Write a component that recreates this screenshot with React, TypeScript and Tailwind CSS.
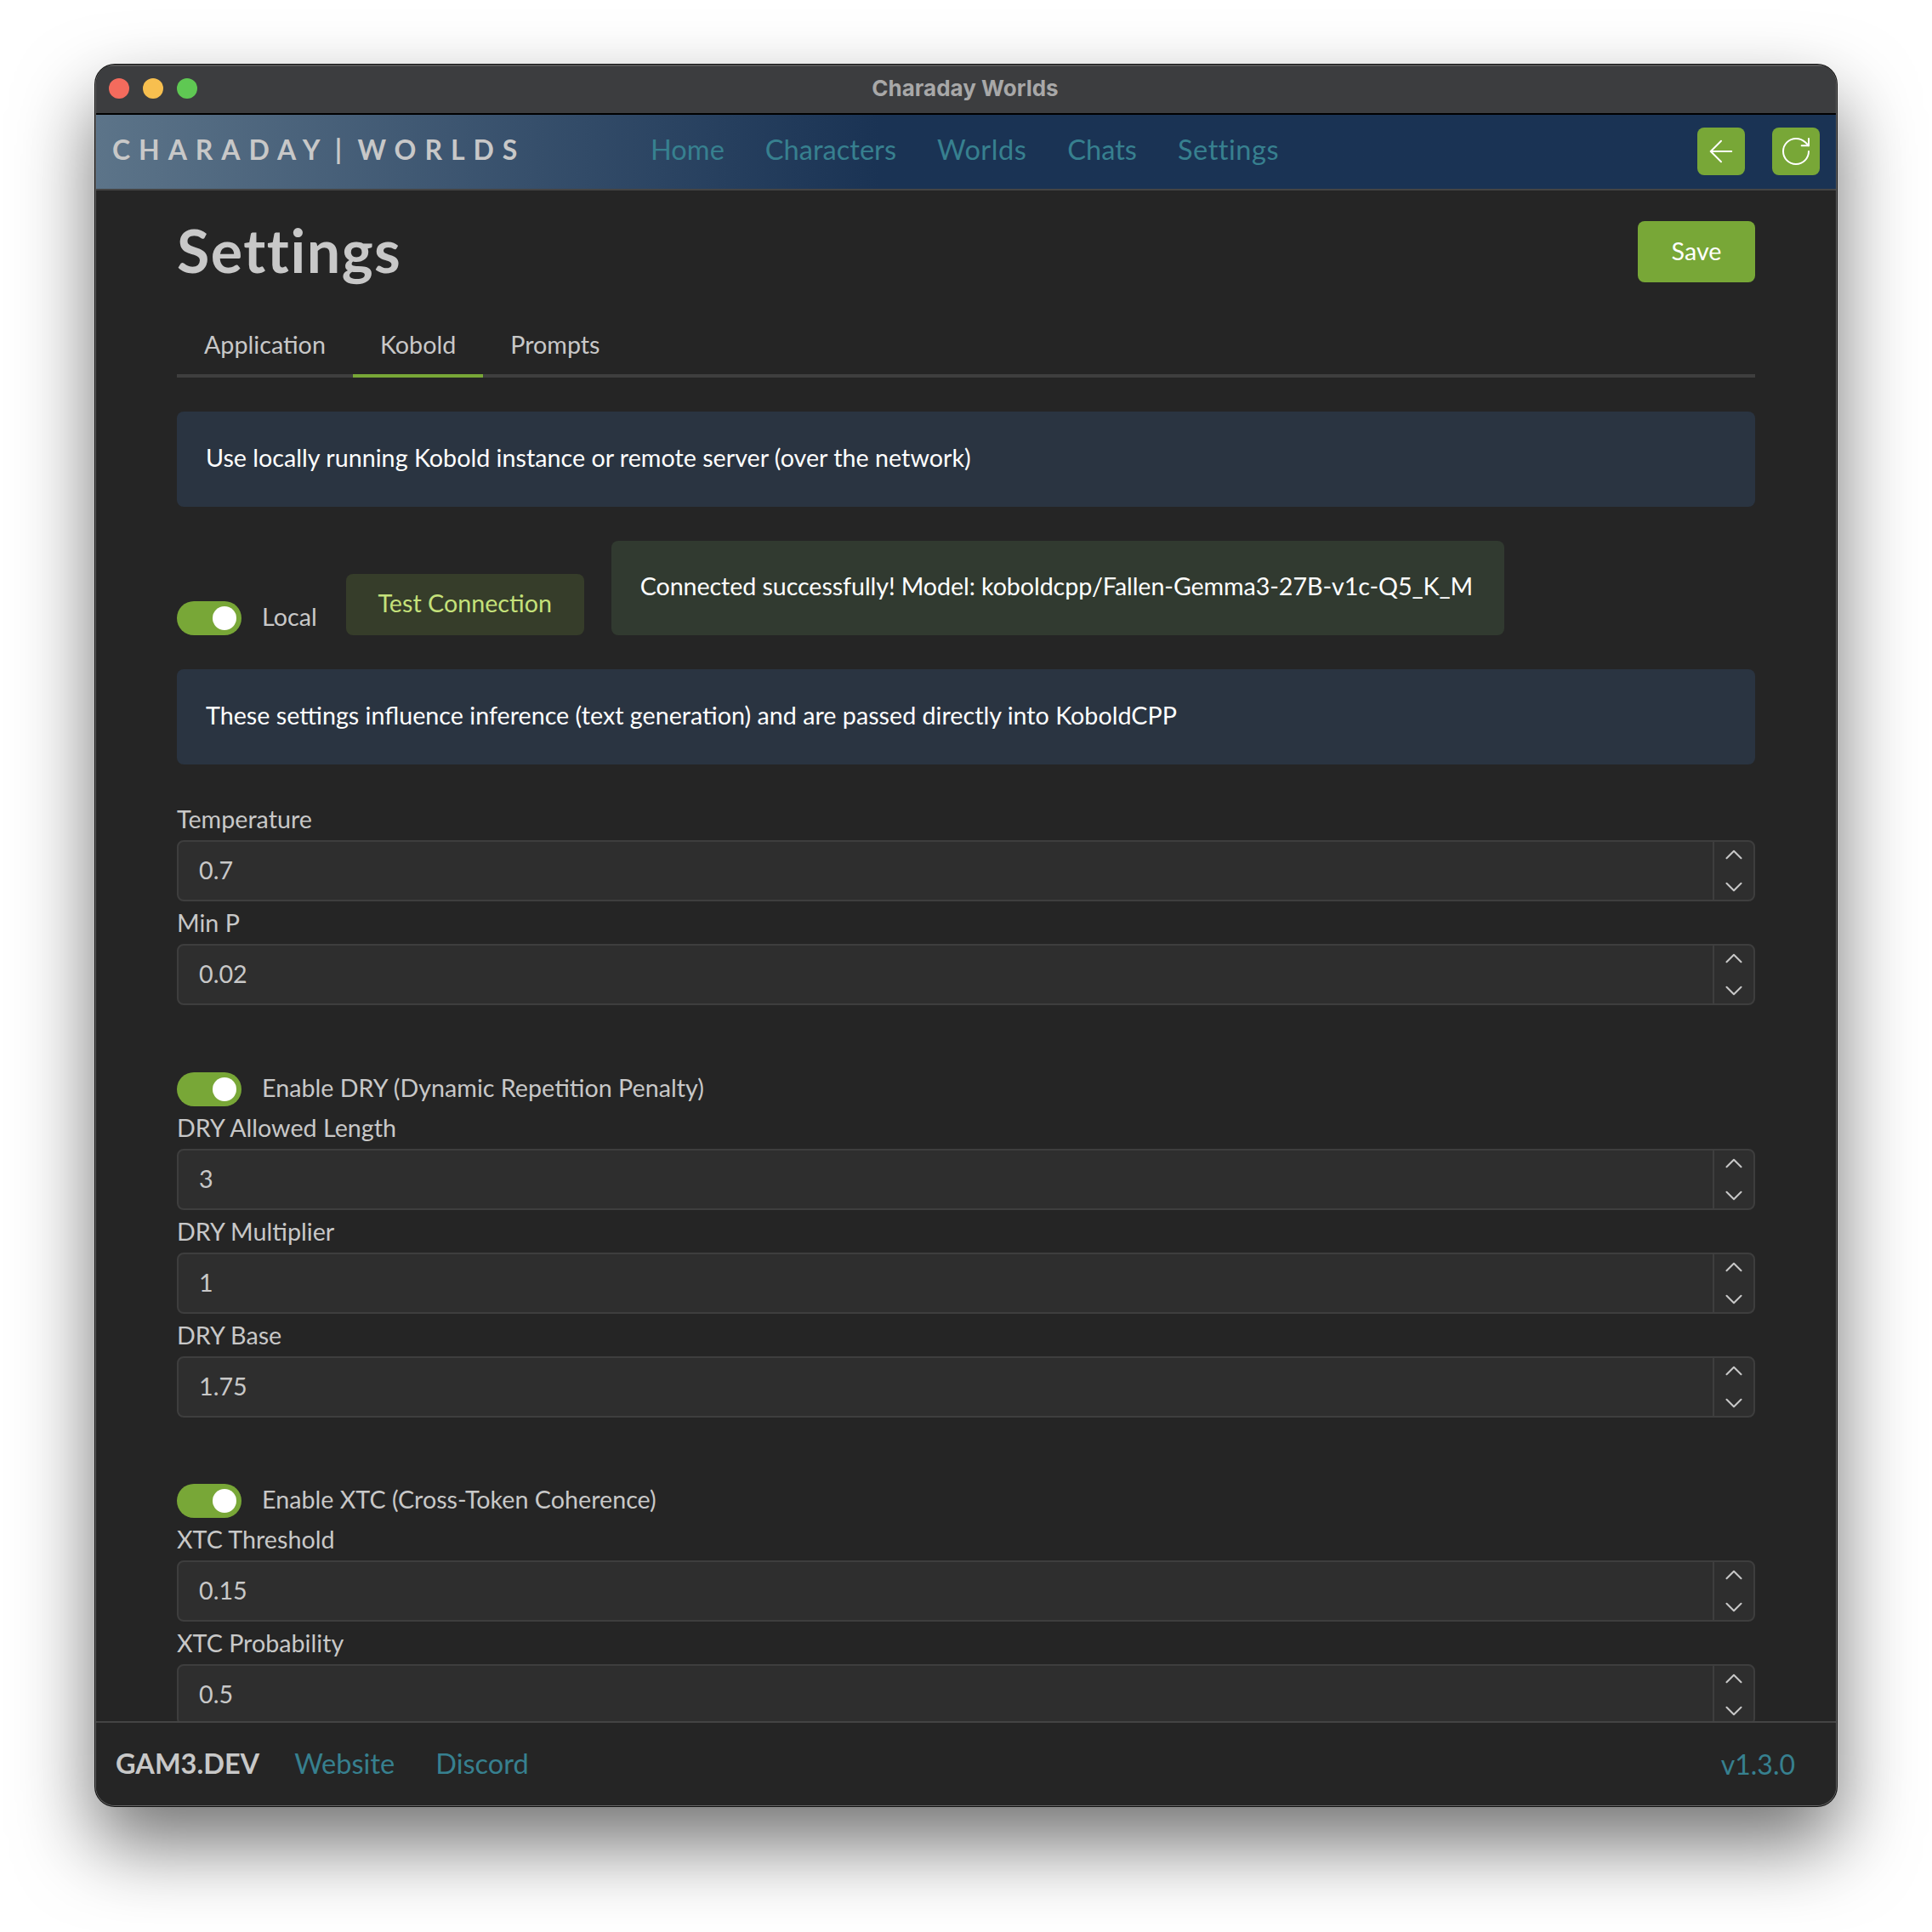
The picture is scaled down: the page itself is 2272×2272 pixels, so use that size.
import { ArrowLeft, RotateCw, ChevronUp, ChevronDown } from "lucide-react";

function Toggle() {
  return (
    <div className="flex h-[40px] w-[76px] shrink-0 items-center justify-end rounded-full bg-[#78a737] pr-[6px]">
      <div className="h-[28px] w-[28px] rounded-full bg-white"></div>
    </div>
  );
}

function ToggleRow({ label, className }: { label: string; className?: string }) {
  return (
    <div className={`flex h-[40px] items-center gap-[24px] ${className ?? ""}`}>
      <Toggle />
      <span className="pb-[3px] text-[28.7px] text-[#c8c8c8]">{label}</span>
    </div>
  );
}

function NumberField({ label, value }: { label: string; value: string }) {
  return (
    <div>
      <div className="flex h-[50px] items-center pt-[2px] text-[28.7px] text-[#c8c8c8]">{label}</div>
      <div className="flex h-[72px] items-stretch rounded-[8px] border-2 border-[#3e3e3e] bg-[#2e2e2e]">
        <div className="flex flex-1 items-center pb-[1px] pl-[24px] text-[28.7px] text-[#c8c8c8]">{value}</div>
        <div className="-my-[2px] flex w-[48px] flex-col items-center justify-between border-l-2 border-[#3e3e3e] text-[#c8c8c8]">
          <ChevronUp size={34} strokeWidth={1.4} />
          <ChevronDown size={34} strokeWidth={1.4} />
        </div>
      </div>
    </div>
  );
}

function InfoBox({ text, className }: { text: string; className?: string }) {
  return (
    <div className={`flex h-[112px] items-center rounded-[8px] bg-[#2a3441] px-[34px] pb-[3px] text-[28.7px] text-white ${className ?? ""}`}>
      {text}
    </div>
  );
}

export default function App() {
  return (
    <div className="h-[2272px] w-[2272px] bg-white pl-[111px] pt-[75px] font-['Lato',sans-serif]">
      <div className="h-[2050px] w-[2050px] rounded-[24px] bg-[#111] p-[1px] shadow-[0_44px_90px_rgba(0,0,0,0.55)]">
        <div className="flex h-full flex-col overflow-hidden rounded-[23px] border-x border-b border-[#666] bg-[#252525]">
          {/* Title bar */}
          <div className="relative flex h-[57px] shrink-0 items-center gap-[16px] border-t-2 border-[#555] bg-[#3c3d3f] pb-[4px] pl-[15px]">
            <div className="h-[24px] w-[24px] rounded-full bg-[#f46b5d]"></div>
            <div className="h-[24px] w-[24px] rounded-full bg-[#f7bf4f]"></div>
            <div className="h-[24px] w-[24px] rounded-full bg-[#5fc853]"></div>
            <div className="absolute inset-x-0 top-0 flex h-full items-center justify-center pb-[4px] pr-[2px] font-['Inter',sans-serif] text-[26px] font-bold text-[#a8a8a8]">
              Charaday Worlds
            </div>
          </div>

          {/* Nav */}
          <div className="flex h-[91px] shrink-0 items-center border-y-2 border-t-black border-b-[#444] bg-gradient-to-r from-[#5c7489] via-[#1a3354] via-45% to-[#1a3354] pl-[19px] pr-[19px]">
            <div className="w-[633px] pb-[6px] text-[32px] font-bold tracking-[0.31em] text-[#c8c8c8] [word-spacing:-9px]">CHARADAY | WORLDS</div>
            <div className="flex flex-1 gap-[48px] pb-[5px] text-[32.6px] text-[#37808f]">
              <span>Home</span>
              <span>Characters</span>
              <span className="tracking-[0.5px]">Worlds</span>
              <span>Chats</span>
              <span className="tracking-[0.5px]">Settings</span>
            </div>
            <div className="mb-[2px] flex gap-[32px]">
              <div className="flex h-[56px] w-[56px] items-center justify-center rounded-[8px] bg-[#78a737] text-white">
                <ArrowLeft size={42} strokeWidth={1.1} />
              </div>
              <div className="flex h-[56px] w-[56px] items-center justify-center rounded-[8px] bg-[#78a737] text-white">
                <RotateCw size={40} strokeWidth={1.2} />
              </div>
            </div>
          </div>

          {/* Page */}
          <div className="min-h-0 flex-1 overflow-hidden px-[95px] pt-[36px]">
            <div className="flex h-[72px] items-center justify-between">
              <h1 className="pb-[3px] text-[70px] font-bold tracking-[1.5px] text-[#c8c8c8]">Settings</h1>
              <div className="flex h-[72px] w-[138px] items-center justify-center rounded-[8px] bg-[#78a737] text-[28.7px] text-white">Save</div>
            </div>

            <div className="mt-[36px] flex h-[76px] border-b-4 border-[#3f3f3f] text-[28.7px] text-[#c8c8c8]">
              <div className="flex h-[76px] items-center border-b-4 border-transparent px-[32px] pt-[4px]">Application</div>
              <div className="flex h-[76px] items-center border-b-4 border-[#78a737] px-[32px] pt-[4px]">Kobold</div>
              <div className="flex h-[76px] items-center border-b-4 border-transparent px-[32px] pt-[4px]">Prompts</div>
            </div>

            <InfoBox className="mt-[40px]" text="Use locally running Kobold instance or remote server (over the network)" />

            <div className="mt-[40px] flex items-end">
              <ToggleRow label="Local" />
              <div className="ml-[34px] flex h-[72px] w-[280px] items-center justify-center rounded-[8px] bg-[#363d2a] pb-[2px] text-[28.7px] text-[#c5e17a]">
                Test Connection
              </div>
              <div className="ml-[32px] flex h-[111px] w-[1050px] items-center whitespace-nowrap rounded-[8px] bg-[#313a30] px-[34px] pb-[3px] text-[28.7px] tracking-[-0.1px] text-white">
                Connected successfully! Model: koboldcpp/Fallen-Gemma3-27B-v1c-Q5_K_M
              </div>
            </div>

            <InfoBox className="mt-[40px]" text="These settings influence inference (text generation) and are passed directly into KoboldCPP" />

            <div className="mt-[39px]">
              <NumberField label="Temperature" value="0.7" />
              <NumberField label="Min P" value="0.02" />
            </div>

            <ToggleRow className="mt-[79px]" label="Enable DRY (Dynamic Repetition Penalty)" />
            <NumberField label="DRY Allowed Length" value="3" />
            <NumberField label="DRY Multiplier" value="1" />
            <NumberField label="DRY Base" value="1.75" />

            <ToggleRow className="mt-[78px]" label="Enable XTC (Cross-Token Coherence)" />
            <NumberField label="XTC Threshold" value="0.15" />
            <NumberField label="XTC Probability" value="0.5" />
          </div>

          {/* Footer */}
          <div className="flex h-[99px] shrink-0 items-center justify-between border-t-2 border-[#444] bg-[#252525] pl-[23px] pr-[48px] text-[32.6px]">
            <div className="flex items-center">
              <span className="text-[32.5px] font-bold text-[#c8c8c8]">GAM3.DEV</span>
              <span className="ml-[41px] text-[#37808f]">Website</span>
              <span className="ml-[48px] text-[#37808f]">Discord</span>
            </div>
            <span className="text-[32px] text-[#37808f]">v1.3.0</span>
          </div>
        </div>
      </div>
    </div>
  );
}
